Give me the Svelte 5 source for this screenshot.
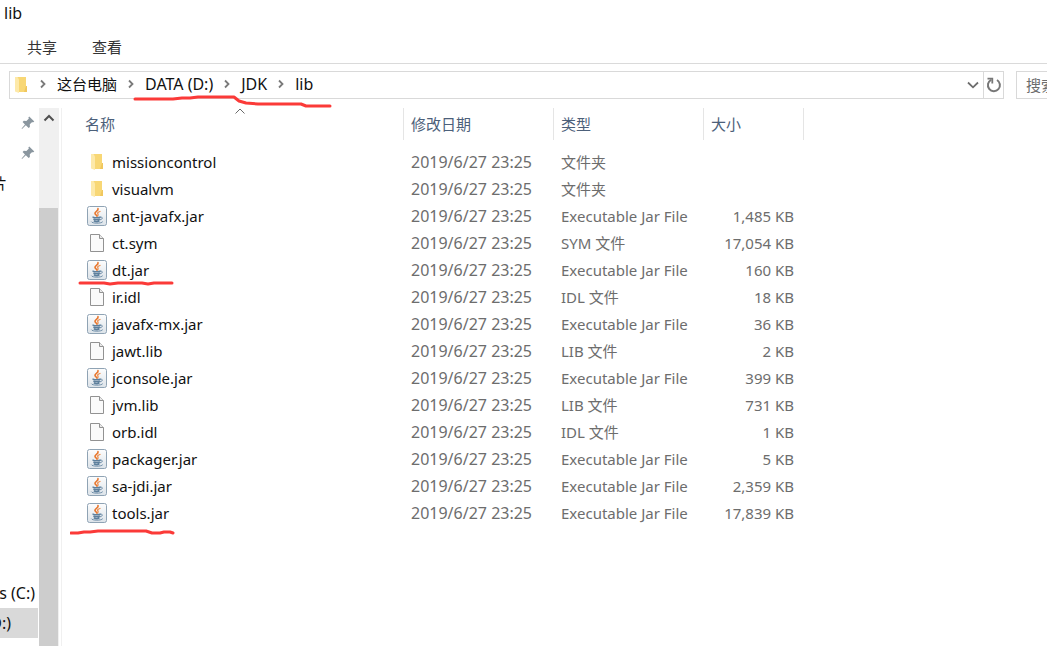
<script lang="ts">
	type Kind = 'folder' | 'jar' | 'file';

	interface Entry {
		name: string;
		kind: Kind;
		type: string;
		size?: string;
		mark?: string;
	}

	const modified = '2019/6/27 23:25';

	const entries: Entry[] = [
		{ name: 'missioncontrol', kind: 'folder', type: '文件夹' },
		{ name: 'visualvm', kind: 'folder', type: '文件夹' },
		{ name: 'ant-javafx.jar', kind: 'jar', type: 'Executable Jar File', size: '1,485 KB' },
		{ name: 'ct.sym', kind: 'file', type: 'SYM 文件', size: '17,054 KB' },
		{
			name: 'dt.jar',
			kind: 'jar',
			type: 'Executable Jar File',
			size: '160 KB',
			mark: 'M10 4 H34 L40 5 L48 4 H72 L78 5 L84 4 H102'
		},
		{ name: 'ir.idl', kind: 'file', type: 'IDL 文件', size: '18 KB' },
		{ name: 'javafx-mx.jar', kind: 'jar', type: 'Executable Jar File', size: '36 KB' },
		{ name: 'jawt.lib', kind: 'file', type: 'LIB 文件', size: '2 KB' },
		{ name: 'jconsole.jar', kind: 'jar', type: 'Executable Jar File', size: '399 KB' },
		{ name: 'jvm.lib', kind: 'file', type: 'LIB 文件', size: '731 KB' },
		{ name: 'orb.idl', kind: 'file', type: 'IDL 文件', size: '1 KB' },
		{ name: 'packager.jar', kind: 'jar', type: 'Executable Jar File', size: '5 KB' },
		{ name: 'sa-jdi.jar', kind: 'jar', type: 'Executable Jar File', size: '2,359 KB' },
		{
			name: 'tools.jar',
			kind: 'jar',
			type: 'Executable Jar File',
			size: '17,839 KB',
			mark: 'M1 11 H8 L14 10 H20 L28 9 H76 L82 11 H90 L94 10 H100 L103 11'
		}
	];

	const path = ['这台电脑', 'DATA (D:)', 'JDK', 'lib'];
</script>

{#snippet chevron()}
	<svg class="chevron" width="8" height="10" viewBox="0 0 8 10" aria-hidden="true">
		<path d="M2 1.5 L5.5 5 L2 8.5" fill="none" stroke="#7a7a7a" stroke-width="1.8" />
	</svg>
{/snippet}

{#snippet folderIcon()}
	<svg width="14" height="18" viewBox="0 0 14 18" aria-hidden="true">
		<path d="M3 1 H12 V10 H13 V16 H3 Z" fill="#f8d775" />
		<path d="M12 10 H13 V16 H10 Z" fill="#f0c75e" />
		<path d="M1 1 H3.5 L5 3.5 V17 L1 15.5 Z" fill="#fde9a9" />
	</svg>
{/snippet}

{#snippet pin()}
	<svg width="14" height="14" viewBox="0 0 14 14" aria-hidden="true">
		<path
			d="M8.2 0.5 L13.3 5.6 L11.9 6.4 L11.2 5.9 L8.8 8.3 L8.9 11 L7.7 12 L4.8 9.2 L1 13 L0.6 12.6 L4 8.4 L1.6 6 L2.8 4.8 L5.4 5 L7.9 2.6 L7.3 1.8 Z"
			fill="#8a969f"
		/>
	</svg>
{/snippet}

{#snippet icon(kind: Kind)}
	<span class="icon">
		{#if kind === 'folder'}
			{@render folderIcon()}
		{:else if kind === 'jar'}
			<svg width="20" height="20" viewBox="0 0 20 20" aria-hidden="true">
				<defs>
					<linearGradient id="tile" x1="0" y1="0" x2="0" y2="1">
						<stop offset="0" stop-color="#fdfdfd" />
						<stop offset="1" stop-color="#dce3e9" />
					</linearGradient>
				</defs>
				<rect x="0.5" y="0.5" width="19" height="19" rx="2" fill="url(#tile)" stroke="#8fa3b4" />
				<g fill="none" stroke-linecap="round">
					<path d="M11 2.5 C12 5 7.5 5.5 8 7.5 C8.2 8.5 9.5 9 9.8 10" stroke="#e8762c" stroke-width="1.6" />
					<path d="M13 5.5 C10 6.5 10.5 7.3 11 8.2 C11.3 9 10.8 9.7 10.5 10" stroke="#ec8c4c" stroke-width="1.3" />
					<path d="M6 11.2 C7.5 12 12 12 13.3 11.2 M6.8 13.2 C8 14 11.5 14 12.6 13.2 M7.3 15 C8.5 15.6 11 15.6 12 15" stroke="#5d7f9c" stroke-width="1.5" />
					<path d="M13.6 11.2 C16.4 10.8 15.8 13.4 13.2 13.8 M4.5 16 C5 17.6 14.5 17.7 15.5 16" stroke="#6e8da8" />
				</g>
			</svg>
		{:else}
			<svg width="16" height="20" viewBox="0 0 16 20" aria-hidden="true">
				<path d="M1.5 1.5 H10.5 L14.5 5.5 V18.5 H1.5 Z" fill="#fafafa" stroke="#929292" />
				<path d="M10.5 1.5 V5.5 H14.5" fill="#e9e9e9" stroke="#929292" />
			</svg>
		{/if}
	</span>
{/snippet}

<div class="explorer">
	<header>
		<div class="title">lib</div>
		<nav class="tabs">
			<button>共享</button>
			<button>查看</button>
		</nav>
	</header>

	<div class="toolbar">
		<div class="address">
			{@render folderIcon()}
			<nav class="crumbs">
				{#each path as part}
					{@render chevron()}
					<a href="#{part}">{part}</a>
				{/each}
			</nav>
			<button class="history" aria-label="历史记录">
				<svg width="12" height="8" viewBox="0 0 12 8">
					<path d="M1 1.5 L6 6.3 L11 1.5" fill="none" stroke="#6d6d6d" stroke-width="1.8" />
				</svg>
			</button>
			<button class="refresh" aria-label="刷新">
				<svg width="16" height="16" viewBox="0 0 16 16">
					<path d="M11 3 A6 6 0 1 1 5.2 2.8" fill="none" stroke="#777" stroke-width="2" />
					<path d="M1.5 1.7 H6.3 V6.5" fill="none" stroke="#777" stroke-width="1.8" />
				</svg>
			</button>
			<svg class="mark" width="200" height="16" viewBox="0 0 200 16" aria-hidden="true">
				<path d="M3 5 H41 L50 4 H58 L66 3 H102 L107 7 L114 9 L126 10 H169 L174 12 H198" />
			</svg>
		</div>
		<input class="search" type="text" placeholder="搜索" aria-label="搜索" />
	</div>

	<div class="body">
		<aside>
			<div class="item">{@render pin()}</div>
			<div class="item">{@render pin()}</div>
			<div class="item clipped">片</div>
			<div class="spacer"></div>
			<div class="item drive">s (C:)</div>
			<div class="item current">D:)</div>
		</aside>
		<div class="scrollbar">
			<button aria-label="向上滚动">
				<svg width="12" height="8" viewBox="0 0 12 8">
					<path d="M1.5 6.5 L6 2 L10.5 6.5" fill="none" stroke="#505050" stroke-width="2" />
				</svg>
			</button>
			<div class="thumb"></div>
		</div>

		<main>
			<table>
				<colgroup>
					<col class="name-col" />
					<col class="date-col" />
					<col class="type-col" />
					<col class="size-col" />
				</colgroup>
				<thead>
					<tr>
						<th>
							名称
							<svg class="sort" width="10" height="6" viewBox="0 0 10 6" aria-hidden="true">
								<path d="M0.5 5.5 L5 1 L9.5 5.5" fill="none" stroke="#6a6a6a" />
							</svg>
						</th>
						<th>修改日期</th>
						<th>类型</th>
						<th>大小</th>
					</tr>
				</thead>
				<tbody>
					{#each entries as entry}
						<tr>
							<td class="name">
								<div class="file">
									{@render icon(entry.kind)}
									<span>{entry.name}</span>
								</div>
								{#if entry.mark}
									<svg class="mark" width="110" height="16" viewBox="0 0 110 16" aria-hidden="true">
										<path d={entry.mark} />
									</svg>
								{/if}
							</td>
							<td class="date">{modified}</td>
							<td>{entry.type}</td>
							<td class="size">{entry.size ?? ''}</td>
						</tr>
					{/each}
				</tbody>
			</table>
		</main>
	</div>
</div>

<style>
	:global(body) {
		margin: 0;
		background: #fff;
	}

	.explorer {
		display: flex;
		flex-direction: column;
		min-height: 100vh;
		overflow: hidden;
		font-family: 'Noto Sans', 'Noto Sans CJK SC', sans-serif;
		font-size: 15px;
		line-height: 20px;
		color: #111;
	}

	button,
	input {
		font: inherit;
		color: inherit;
		border: 0;
		padding: 0;
		background: none;
	}

	svg {
		display: block;
		flex: none;
	}

	header {
		border-bottom: 1px solid #dadada;
	}

	.title {
		padding: 3px 4px 0;
		font-size: 16px;
	}

	.tabs {
		display: flex;
		gap: 35px;
		padding: 14px 27px 6px;
		color: #333;
	}

	.toolbar {
		display: flex;
		gap: 12px;
		padding: 7px 0 9px 9px;
	}

	.address {
		position: relative;
		display: flex;
		flex: 1;
		align-items: center;
		height: 26px;
		padding-left: 4px;
		border: 1px solid #d9d9d9;
	}

	.crumbs {
		display: flex;
		flex: 1;
		align-items: center;
		gap: 10px;
		padding: 0 0 2px 11px;
		font-size: 16px;
	}

	.crumbs a {
		color: inherit;
		text-decoration: none;
	}

	.crumbs a:first-of-type {
		font-size: 15px;
	}

	.history {
		display: flex;
		align-items: center;
		justify-content: center;
		width: 20px;
		height: 100%;
	}

	.refresh {
		display: flex;
		align-items: center;
		justify-content: center;
		width: 20px;
		height: 100%;
		border-left: 1px solid #d9d9d9;
	}

	.search {
		box-sizing: border-box;
		width: 31px;
		padding-left: 9px;
		border: 1px solid #d9d9d9;
		border-right: 0;
		border-radius: 0;
	}

	.search::placeholder {
		color: #6d6d6d;
		opacity: 1;
	}

	.mark {
		position: absolute;
		fill: none;
		stroke: #fb3a38;
		stroke-width: 3;
		stroke-linecap: round;
		stroke-linejoin: round;
		pointer-events: none;
	}

	.address .mark {
		top: 22px;
		left: 122px;
		z-index: 1;
	}

	.body {
		display: flex;
		flex: 1;
	}

	aside {
		display: flex;
		flex-direction: column;
		width: 38px;
		padding-right: 1px;
		overflow: hidden;
	}

	.item {
		display: flex;
		flex: none;
		align-items: center;
		justify-content: flex-end;
		height: 30px;
		padding-right: 3px;
		white-space: nowrap;
	}

	.item.clipped {
		padding-right: 31px;
	}

	.spacer {
		height: 380px;
	}

	.item.current {
		padding-right: 27px;
		background: #d9d9d9;
	}

	.item.drive,
	.item.current {
		font-size: 16px;
	}

	.scrollbar {
		display: flex;
		flex-direction: column;
		width: 20px;
		background: #f0f0f0;
	}

	.scrollbar button {
		display: flex;
		justify-content: center;
		height: 100px;
		padding-top: 6px;
	}

	.thumb {
		flex: 1;
		margin-right: 1px;
		background: #cdcdcd;
	}

	main {
		flex: 1;
		margin-left: 2px;
		border-left: 1px solid #f0f0f0;
	}

	table {
		width: 742px;
		table-layout: fixed;
		border-collapse: separate;
		border-spacing: 0;
	}

	.name-col {
		width: 342px;
	}

	.date-col,
	.type-col {
		width: 150px;
	}

	.size-col {
		width: 100px;
	}

	th {
		position: relative;
		box-sizing: border-box;
		height: 32px;
		padding: 0 0 0 7px;
		border-right: 1px solid #e5e5e5;
		font-weight: 400;
		text-align: left;
		color: #4c607a;
	}

	th:first-child {
		padding-left: 23px;
	}

	.sort {
		position: absolute;
		top: 0;
		left: 173px;
	}

	tbody::before {
		content: '';
		display: block;
		height: 8px;
	}

	td {
		height: 27px;
		padding: 0 0 0 7px;
		white-space: nowrap;
		color: #6d6d6d;
	}

	td.name {
		position: relative;
		padding-left: 25px;
		color: #111;
	}

	td.date {
		font-size: 16px;
	}

	td.size {
		padding: 0 10px 0 0;
		text-align: right;
	}

	.file {
		display: flex;
		align-items: center;
		gap: 5px;
	}

	.icon {
		display: flex;
		justify-content: center;
		width: 20px;
	}

	td .mark {
		top: 23px;
		left: 8px;
	}
</style>
